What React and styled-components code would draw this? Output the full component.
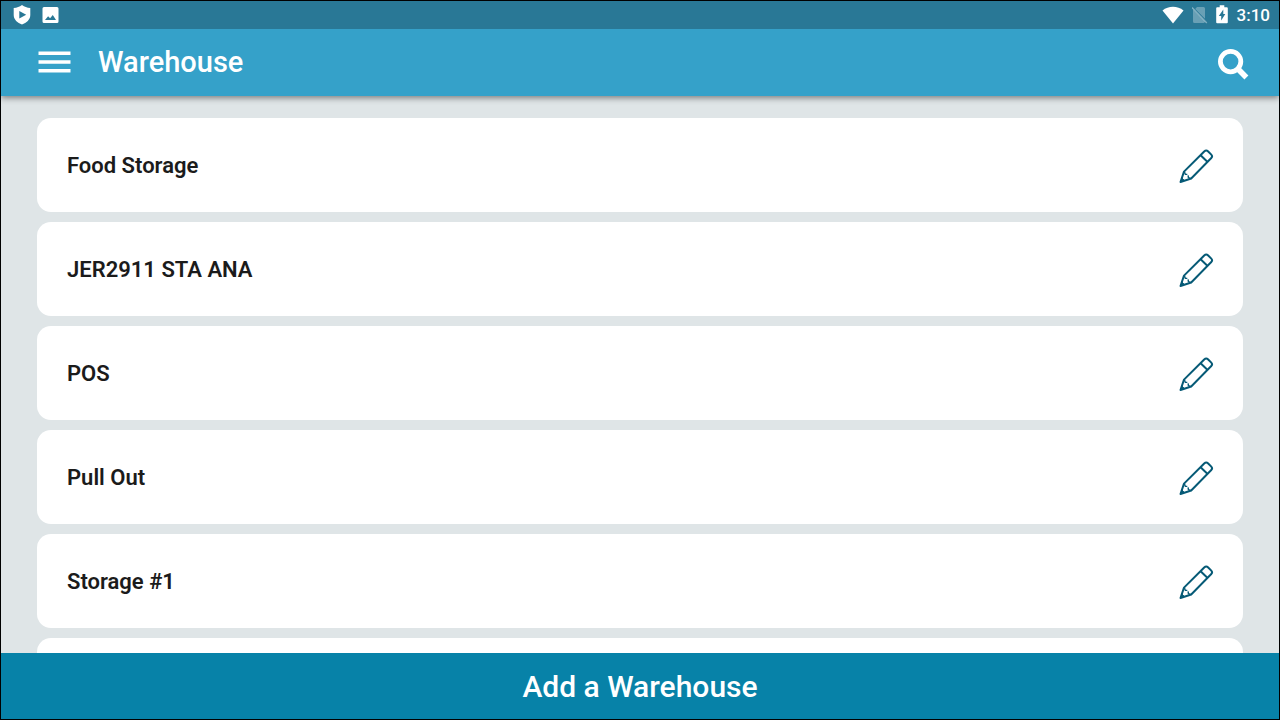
import React from "react";
import styled, { createGlobalStyle } from "styled-components";

const GlobalStyle = createGlobalStyle`
  *, *::before, *::after { box-sizing: border-box; }
  body { margin: 0; font-family: Roboto, "Liberation Sans", sans-serif; }
  button { font: inherit; color: inherit; border: 0; background: none; padding: 0; cursor: pointer; }
`;

const Screen = styled.div`
  display: flex;
  flex-direction: column;
  height: 100vh;
  border: 1px solid #000;
  background: #dfe5e7;
`;

const StatusBar = styled.div`
  position: relative;
  z-index: 1;
  display: flex;
  flex: none;
  align-items: center;
  justify-content: space-between;
  height: 28px;
  padding: 0 9px 0 12px;
  background: #297896;
  color: #fff;
`;

const StatusGroup = styled.div`
  display: flex;
  align-items: center;
  gap: ${(p) => p.$gap}px;
`;

const Clock = styled.time`
  margin-left: 1px;
  font-size: 17px;
  line-height: 28px;
  font-weight: 500;
`;

const AppBar = styled.header`
  position: relative;
  display: flex;
  flex: none;
  align-items: center;
  height: 67px;
  padding: 0 30px 2px 36px;
  background: #35a1c9;
  color: #fff;
  box-shadow: 0 2px 6px rgba(0, 0, 0, 0.45);
`;

const IconButton = styled.button`
  display: flex;
  flex: none;
`;

const Title = styled.h1`
  flex: 1;
  margin: 0 0 0 27px;
  font-size: 29px;
  line-height: 36px;
  font-weight: 500;
`;

const List = styled.ul`
  display: flex;
  flex: 1;
  flex-direction: column;
  gap: 10px;
  min-height: 0;
  margin: 0;
  padding: 22px 36px 0;
  overflow: hidden;
  list-style: none;
`;

const Card = styled.li`
  display: flex;
  flex: none;
  align-items: center;
  justify-content: space-between;
  height: 94px;
  padding: 2px 29px 0 30px;
  border-radius: 14px;
  background: #fff;
`;

const CardName = styled.span`
  font-size: 22px;
  line-height: 28px;
  font-weight: 600;
  color: #1b1b1b;
`;

const AddButton = styled.button`
  flex: none;
  height: 66px;
  && {
    padding-top: 2px;
    background: #0782a8;
    color: #fff;
    font-size: 30px;
    line-height: 36px;
    font-weight: 500;
  }
`;

const ShieldIcon = () => (
  <svg width="18" height="20" viewBox="0 0 18 20" aria-hidden="true">
    <path fill="#fff" fillRule="evenodd" d="M9 0 C11.5 1.8 14 2.7 17.3 3 V10 C17.3 14.5 13.5 18 9 19.5 C4.5 18 0.7 14.5 0.7 10 V3 C4 2.7 6.5 1.8 9 0 Z M6.3 6 V13.4 L13.2 9.7 Z" />
  </svg>
);

const PictureIcon = () => (
  <svg width="18" height="18" viewBox="0 0 18 18" aria-hidden="true">
    <path fill="#fff" fillRule="evenodd" d="M2 1 H15 A1.5 1.5 0 0 1 16.5 2.5 V15.5 A1.5 1.5 0 0 1 15 17 H2 A1.5 1.5 0 0 1 0.5 15.5 V2.5 A1.5 1.5 0 0 1 2 1 Z M3 14 H14 L10.8 9 L8.1 12.3 L6.1 10.3 Z" />
  </svg>
);

const WifiIcon = () => (
  <svg width="22" height="18" viewBox="0 0 22 18" aria-hidden="true">
    <path fill="#fff" d="M0.5 4.4 C6.5 -0.6 15.5 -0.6 21.5 4.4 L11 17.5 Z" />
  </svg>
);

const NoSimIcon = () => (
  <svg width="16" height="18" viewBox="0 0 16 18" aria-hidden="true">
    <g fill="#fff" opacity="0.3">
      <path d="M5 1 H11.5 A1.5 1.5 0 0 1 13 2.5 V12.7 L3.2 2.9 Z M1 3.2 L13 15.7 Q12.5 17 11.5 17 H2.5 A1.5 1.5 0 0 1 1 15.5 Z" />
    </g>
    <path d="M0 1.5 L14.8 17" stroke="#fff" strokeOpacity="0.4" strokeWidth="1.4" />
  </svg>
);

const BatteryIcon = () => (
  <svg width="12" height="20" viewBox="0 0 12 20" aria-hidden="true">
    <path fill="#fff" fillRule="evenodd" d="M3.7 0.3 H8.3 V2.2 H10.8 A1 1 0 0 1 11.8 3.2 V17.2 A1 1 0 0 1 10.8 18.2 H1.2 A1 1 0 0 1 0.2 17.2 V3.2 A1 1 0 0 1 1.2 2.2 H3.7 Z M7.3 4.5 L2.8 11 H5.2 V15.5 L9.3 9 H7.3 Z" />
  </svg>
);

const MenuIcon = () => (
  <svg width="34" height="24" viewBox="0 0 34 24" aria-hidden="true">
    <path d="M1.5 3.2 H33.5 M1.5 12 H33.5 M1.5 20.8 H33.5" stroke="#fff" strokeWidth="3.6" />
  </svg>
);

const SearchIcon = () => (
  <svg width="32" height="36" viewBox="0 0 32 36" aria-hidden="true" fill="none" stroke="#fff">
    <circle cx="13.6" cy="17.6" r="10.2" strokeWidth="4.8" />
    <path d="M20.8 24.8 L29.4 33.4" strokeWidth="5.6" />
  </svg>
);

const PencilIcon = () => (
  <svg width="36" height="36" viewBox="0 0 36 36" fill="none" stroke="#065a76" strokeWidth="2" strokeLinejoin="round" aria-hidden="true">
    <path d="M2.5 34 L6 23.6 L26.2 3.5 Q28.2 1.5 30.2 3.5 L33.3 6.6 Q35 8.3 33.3 10 L13.2 30.5 Z" />
    <path d="M22.6 7.2 L29.6 14" />
    <path d="M6.5 24 L7.3 26.4 L9.3 26.4 M10.1 27.4 L10.4 29.6 L12.6 30.3" strokeWidth="1.4" />
    <path d="M2.8 33.7 L4.2 30.2 L6.3 32.5 Z" fill="#065a76" strokeWidth="1" />
  </svg>
);

const warehouses = ["Food Storage", "JER2911 STA ANA", "POS", "Pull Out", "Storage #1", ""];

export default function App() {
  return (
    <Screen>
      <GlobalStyle />
      <StatusBar>
        <StatusGroup $gap={11}>
          <ShieldIcon />
          <PictureIcon />
        </StatusGroup>
        <StatusGroup $gap={8}>
          <WifiIcon />
          <NoSimIcon />
          <BatteryIcon />
          <Clock>3:10</Clock>
        </StatusGroup>
      </StatusBar>
      <AppBar>
        <IconButton type="button" aria-label="Menu"><MenuIcon /></IconButton>
        <Title>Warehouse</Title>
        <IconButton type="button" aria-label="Search"><SearchIcon /></IconButton>
      </AppBar>
      <List>
        {warehouses.map((name, i) => (
          <Card key={i}>
            <CardName>{name}</CardName>
            {name && (
              <IconButton type="button" aria-label={`Edit ${name}`}><PencilIcon /></IconButton>
            )}
          </Card>
        ))}
      </List>
      <AddButton type="button">Add a Warehouse</AddButton>
    </Screen>
  );
}
